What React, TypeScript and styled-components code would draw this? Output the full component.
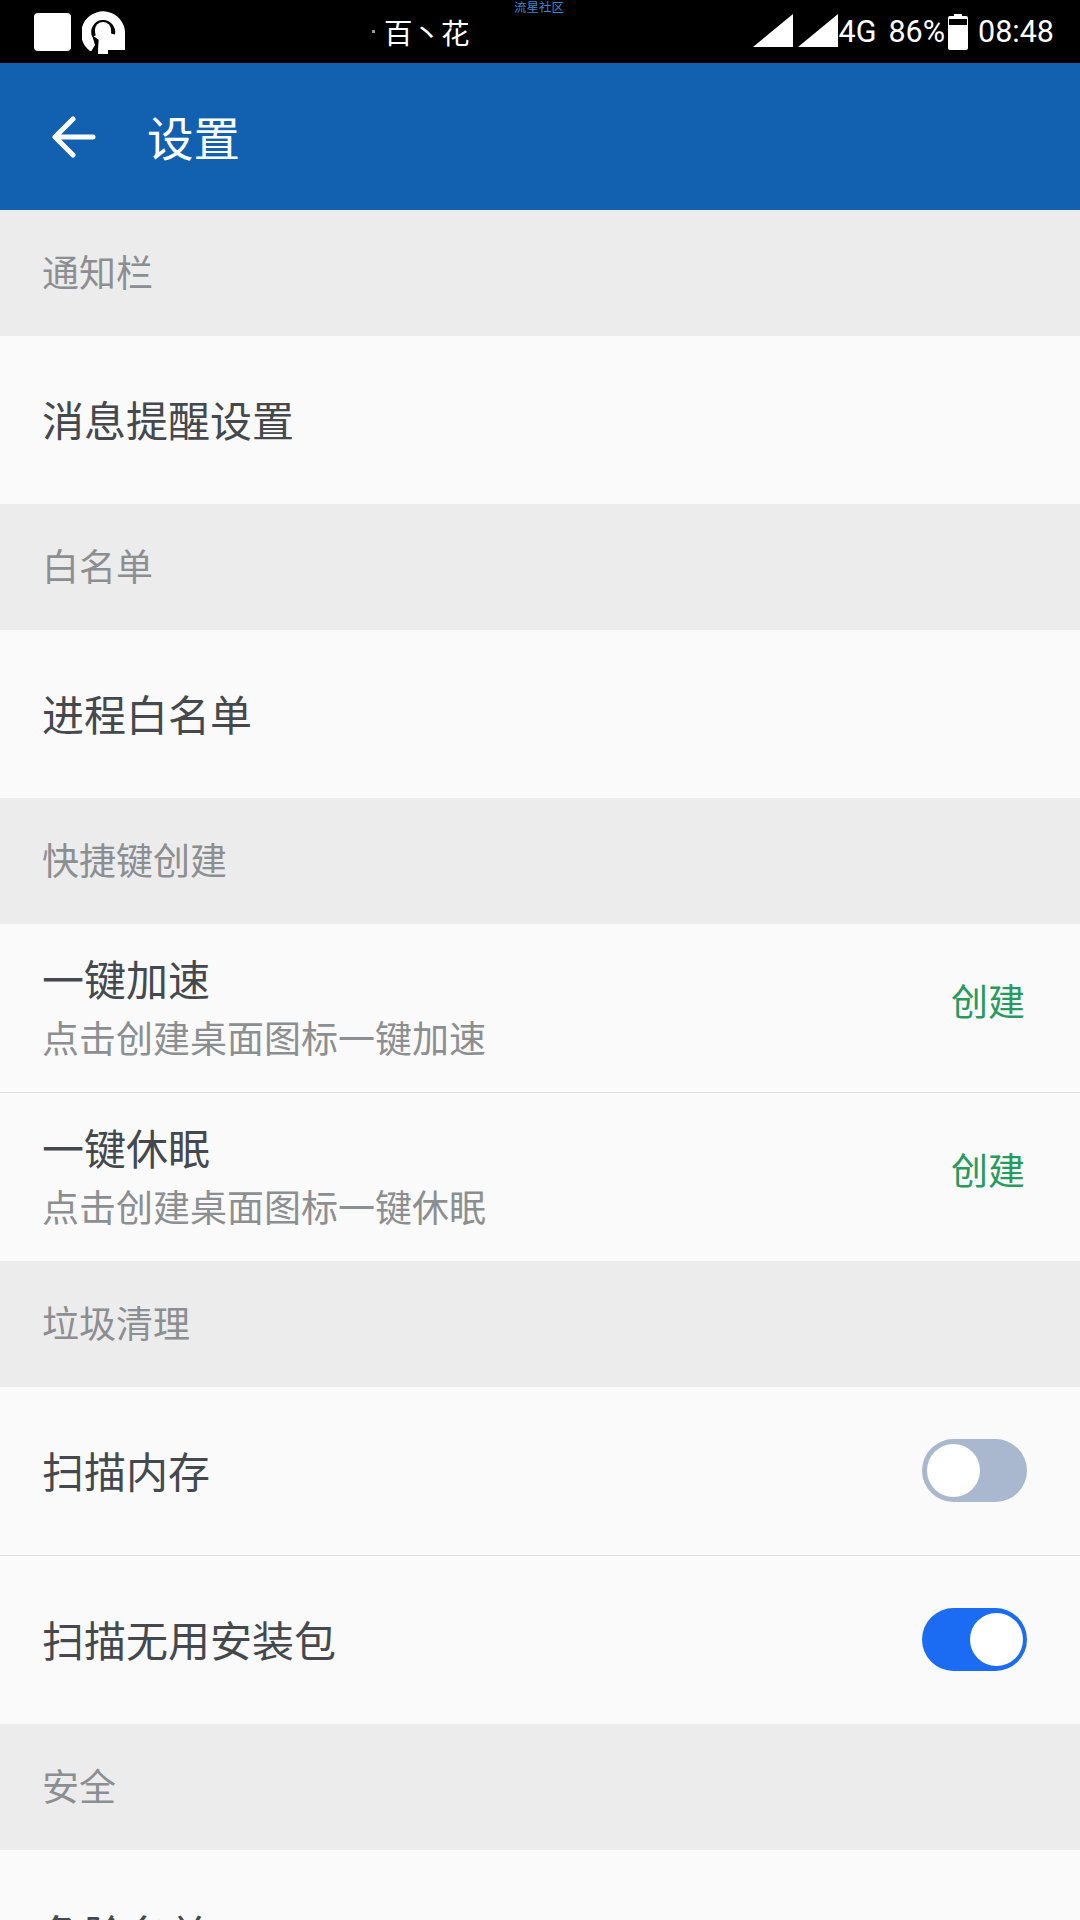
import React from "react";
import styled, { createGlobalStyle } from "styled-components";

const Global = createGlobalStyle`
  html, body { margin: 0; padding: 0; background: #fafafa; }
  body { width: 1080px; height: 1920px; overflow: hidden; font-family: "Noto Sans CJK SC", "Roboto", sans-serif; }
`;

const Page = styled.div`
  width: 1080px;
  height: 1920px;
  overflow: hidden;
  display: flex;
  flex-direction: column;
`;

const StatusBar = styled.div`
  position: relative;
  flex: none;
  height: 63px;
  background: #000;
  display: flex;
  align-items: center;
  justify-content: space-between;
  padding: 0 26px 0 34px;
  color: #fff;
`;

const StatusLeft = styled.div`
  display: flex;
  align-items: center;
  gap: 11px;
`;

const AppSquare = styled.div`
  width: 37px;
  height: 38px;
  border-radius: 4px;
  background: #fff;
`;

const CarrierName = styled.div`
  position: absolute;
  left: 384px;
  top: 13px;
  font-size: 28.5px;
  line-height: 38px;
  white-space: nowrap;
`;

const Speck = styled.div`
  position: absolute;
  left: 372px;
  top: 30px;
  width: 3px;
  height: 3px;
  background: #999;
`;

const Watermark = styled.div`
  position: absolute;
  left: 514px;
  top: 0;
  font-size: 12.5px;
  line-height: 14px;
  color: #3f86cf;
  white-space: nowrap;
`;

const StatusRight = styled.div`
  display: flex;
  align-items: center;
  font-family: "Roboto", sans-serif;
  font-size: 30.5px;
  line-height: 40px;
`;

const Signal = styled.svg`
  display: block;
  width: 40px;
  height: 33px;
  margin-top: -2px;
  margin-left: 5px;
`;

const Network = styled.span`
  margin: 0 12px 0 0.5px;
`;

const Battery = styled.svg`
  display: block;
  width: 20px;
  height: 36px;
  margin: 0 10px 0 3px;
`;

const Header = styled.header`
  flex: none;
  height: 147px;
  background: #1260b0;
  display: flex;
  align-items: center;
  padding-left: 52px;
  color: #fff;
`;

const BackIcon = styled.svg`
  display: block;
  width: 44px;
  height: 42px;
  margin-right: 51px;
`;

const Title = styled.h1`
  margin: -2px 0 0;
  font-size: 46.5px;
  font-weight: 400;
  line-height: 60px;
`;

const Section = styled.div`
  flex: none;
  height: 126px;
  box-sizing: border-box;
  background: #ececed;
  color: #8c8f91;
  font-size: 37px;
  line-height: 123px;
  padding-left: 42px;
`;

const Row = styled.div<{ $divider?: boolean }>`
  flex: none;
  height: ${(p) => (p.$divider ? "169px" : "168px")};
  box-sizing: border-box;
  background: #fafafa;
  display: flex;
  align-items: center;
  justify-content: space-between;
  padding: 0 53px 0 42px;
  border-bottom: ${(p) => (p.$divider ? "1px solid #dfdfdf" : "none")};
`;

const Texts = styled.div`
  display: flex;
  flex-direction: column;
  gap: 4px;
  padding-bottom: 3px;
`;

const Label = styled.div`
  color: #45494d;
  font-size: 42px;
  line-height: 54px;
  padding-bottom: 3px;
`;

const Sub = styled.div`
  color: #8c8f91;
  font-size: 37px;
  line-height: 50px;
`;

const Action = styled.div`
  color: #279a5e;
  font-size: 37px;
  line-height: 50px;
  margin: 0 2px 16px 0;
`;

const Track = styled.div<{ $on: boolean }>`
  position: relative;
  width: 105px;
  height: 63px;
  margin-top: -2px;
  border-radius: 32px;
  background: ${(p) => (p.$on ? "#1b6cf2" : "#a9b7cf")};
`;

const Knob = styled.div<{ $on: boolean }>`
  position: absolute;
  top: 5px;
  left: ${(p) => (p.$on ? "48px" : "5px")};
  width: 53px;
  height: 53px;
  border-radius: 50%;
  background: #fff;
`;

const Toggle = ({ on }: { on: boolean }) => (
  <Track $on={on}>
    <Knob $on={on} />
  </Track>
);

const SignalIcon = () => (
  <Signal viewBox="0 0 40 33">
    <path d="M0 33 L40 0 V33 Z" fill="#fff" />
  </Signal>
);

export default function App() {
  return (
    <Page>
      <Global />
      <StatusBar>
        <StatusLeft>
          <AppSquare />
          <svg width="44" height="46" viewBox="0 0 44 46">
            <path fill="#fff" d="M8 42 A22 22 0 1 1 43 22 V41 H26 L25 45 H16 L16 42 Z" />
            <path fill="none" stroke="#000" strokeWidth="4" d="M31 25 A10 10 0 1 0 12 27" />
            <path fill="#000" d="M10 26 L17 31 L16 46 L7 46 L13 36 Z" />
            <circle cx="21" cy="21" r="8" fill="#fff" />
            <path fill="#fff" d="M17 25 H25 L26 45 H16 Z" />
          </svg>
        </StatusLeft>
        <Speck />
        <CarrierName>百丶花</CarrierName>
        <Watermark>流星社区</Watermark>
        <StatusRight>
          <SignalIcon />
          <SignalIcon />
          <Network>4G</Network>
          <span>86%</span>
          <Battery viewBox="0 0 20 36">
            <path d="M6 0 H14 V2 H18 Q20 2 20 4 V34 Q20 36 18 36 H2 Q0 36 0 34 V4 Q0 2 2 2 H6 Z" fill="#fff" />
            <rect x="1" y="5" width="18" height="6" fill="#000" />
          </Battery>
          <span>08:48</span>
        </StatusRight>
      </StatusBar>
      <Header>
        <BackIcon viewBox="0 0 44 42" fill="none" stroke="#fff" strokeWidth="5" strokeLinecap="round" strokeLinejoin="round">
          <path d="M41 21 H4 M21 3 L3 21 L21 39" />
        </BackIcon>
        <Title>设置</Title>
      </Header>
      <Section>通知栏</Section>
      <Row>
        <Label>消息提醒设置</Label>
      </Row>
      <Section>白名单</Section>
      <Row>
        <Label>进程白名单</Label>
      </Row>
      <Section>快捷键创建</Section>
      <Row $divider>
        <Texts>
          <Label>一键加速</Label>
          <Sub>点击创建桌面图标一键加速</Sub>
        </Texts>
        <Action>创建</Action>
      </Row>
      <Row>
        <Texts>
          <Label>一键休眠</Label>
          <Sub>点击创建桌面图标一键休眠</Sub>
        </Texts>
        <Action>创建</Action>
      </Row>
      <Section>垃圾清理</Section>
      <Row $divider>
        <Label>扫描内存</Label>
        <Toggle on={false} />
      </Row>
      <Row>
        <Label>扫描无用安装包</Label>
        <Toggle on={true} />
      </Row>
      <Section>安全</Section>
      <Row>
        <Label>危险名单</Label>
      </Row>
    </Page>
  );
}
